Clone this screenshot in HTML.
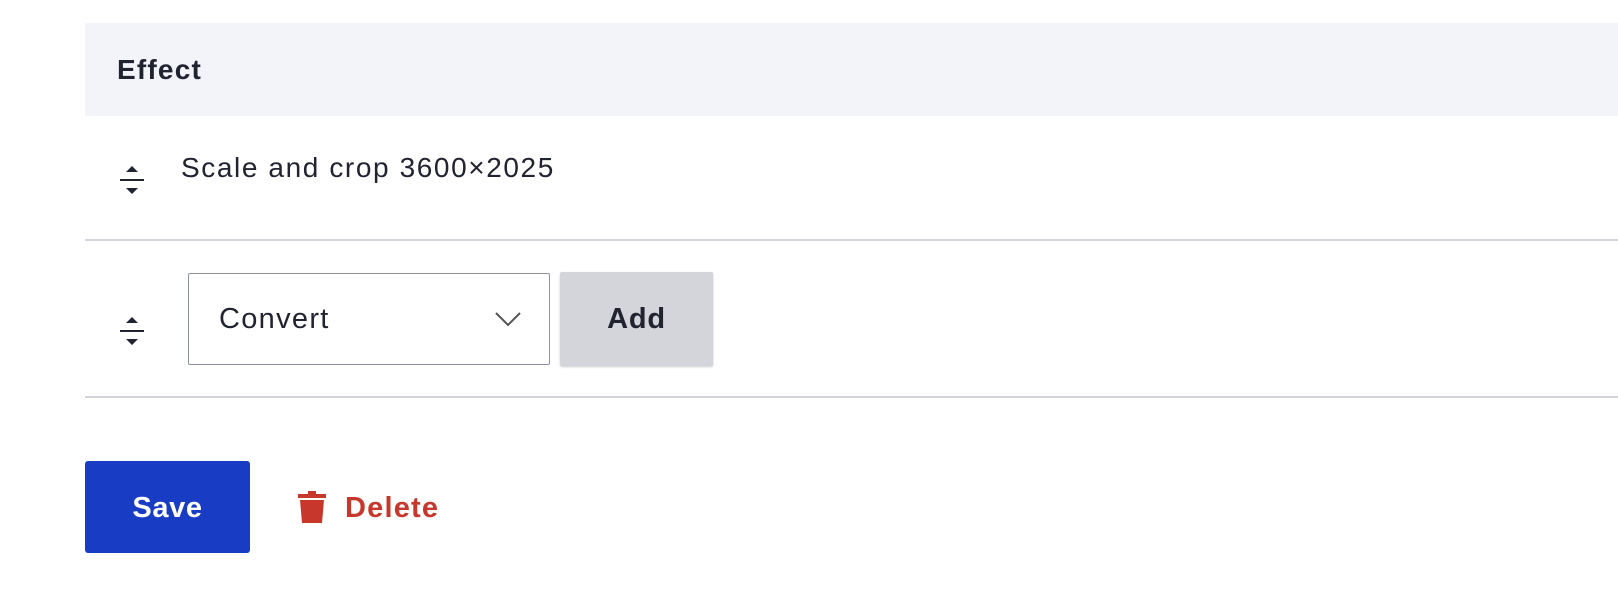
<!DOCTYPE html>
<html><head><style>
body{margin:0;width:1618px;height:590px;background:#fff;font-family:"Liberation Sans",sans-serif;color:#222330;position:relative;overflow:hidden}
.a{position:absolute;white-space:nowrap}
</style></head><body>
<div class="a" style="left:85px;top:23px;width:1533px;height:93px;background:#f3f4f9"></div>
<div class="a" style="left:117px;top:54px;font-size:28px;font-weight:bold;line-height:32px;letter-spacing:1.2px">Effect</div>
<svg class="a" style="left:118px;top:166px" width="28" height="30" viewBox="0 0 28 30"><path d="M8 6h12L14 0z M2 13h24v2H2z M8 22h12l-6 6z" fill="#222330"/></svg>
<div class="a" style="left:181px;top:152px;font-size:28px;line-height:32px;letter-spacing:1.6px">Scale and crop 3600×2025</div>
<div class="a" style="left:85px;top:239px;width:1533px;height:2px;background:#d3d4d9"></div>
<svg class="a" style="left:118px;top:317px" width="28" height="30" viewBox="0 0 28 30"><path d="M8 6h12L14 0z M2 13h24v2H2z M8 22h12l-6 6z" fill="#222330"/></svg>
<div class="a" style="left:188px;top:273px;width:360px;height:90px;border:1.5px solid #8e929c;border-radius:2px"></div>
<div class="a" style="left:219px;top:303px;font-size:29px;line-height:32px;letter-spacing:1.3px">Convert</div>
<svg class="a" style="left:494px;top:310px" width="28" height="18" viewBox="0 0 28 18"><path d="M2 3l12 12 12-12" fill="none" stroke="#555" stroke-width="2"/></svg>
<div class="a" style="left:560px;top:272px;width:153px;height:94px;background:#d4d5da;border-radius:2px;box-shadow:0 1px 2px rgba(0,0,0,.2)"></div>
<div class="a" style="left:560px;top:303px;width:153px;text-align:center;font-size:29px;font-weight:bold;line-height:32px;letter-spacing:0.8px">Add</div>
<div class="a" style="left:85px;top:396px;width:1533px;height:2px;background:#d3d4d9"></div>
<div class="a" style="left:85px;top:461px;width:165px;height:92px;background:#193cc5;border-radius:3px"></div>
<div class="a" style="left:85px;top:492px;width:165px;text-align:center;font-size:29px;font-weight:bold;color:#fff;line-height:32px;letter-spacing:0.6px">Save</div>
<svg class="a" style="left:297px;top:490px" width="30" height="34" viewBox="0 0 30 34"><path d="M11 1h8v3h10v4H1V4h10z M3 10h24l-2 23H5z" fill="#c7372c"/></svg>
<div class="a" style="left:345px;top:492px;font-size:29px;font-weight:bold;color:#c7372c;line-height:32px;letter-spacing:1.2px">Delete</div>
</body></html>
